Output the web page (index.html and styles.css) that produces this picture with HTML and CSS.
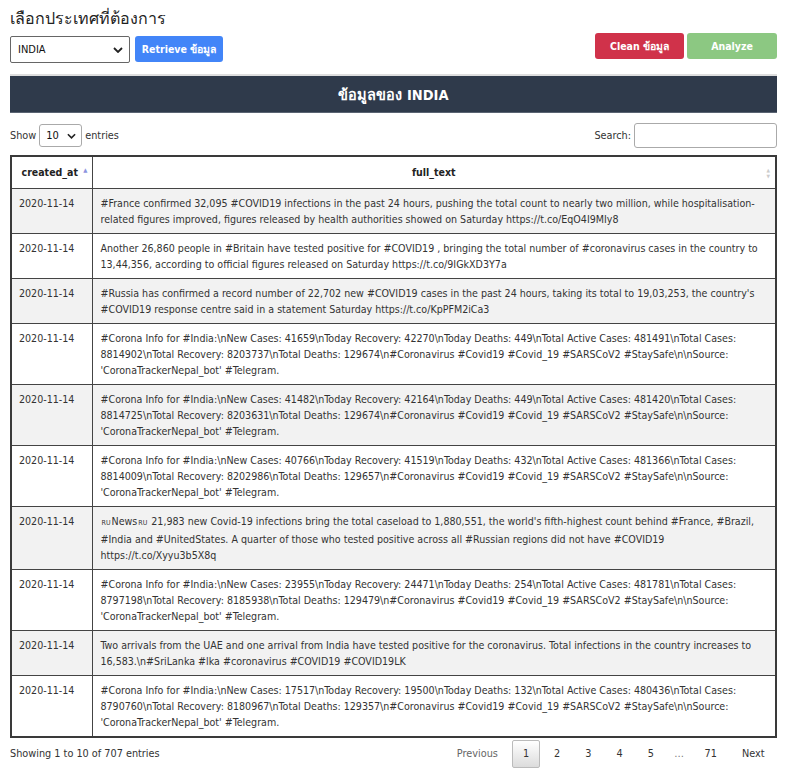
FILE: index.html
```html
<!DOCTYPE html>
<html lang="th">
<head>
<meta charset="utf-8">
<title>เลือกประเทศ</title>
<link rel="stylesheet" href="styles.css">
</head>
<body>
<div class="page">
  <h1 class="title">เลือกประเทศที่ต้องการ</h1>
  <div class="controls">
    <div class="left">
      <div class="select country"><span>INDIA</span><svg class="chev" viewBox="0 0 10 6" width="10" height="6"><path d="M1 1l4 4 4-4" fill="none" stroke="#222" stroke-width="1.8"/></svg></div>
      <button class="btn btn-blue">Retrieve ข้อมูล</button>
    </div>
    <div class="right">
      <button class="btn btn-red">Clean ข้อมูล</button>
      <button class="btn btn-green">Analyze</button>
    </div>
  </div>
  <div class="banner">ข้อมูลของ INDIA</div>
  <div class="dt-top">
    <div class="length">Show <div class="select small"><span>10</span><svg class="chev" viewBox="0 0 10 6" width="9" height="6"><path d="M1 1l4 4 4-4" fill="none" stroke="#222" stroke-width="1.8"/></svg></div> entries</div>
    <div class="search">Search: <div class="input"></div></div>
  </div>
  <table class="dt">
    <colgroup><col class="c1"><col class="c2"></colgroup>
    <thead>
      <tr><th class="sorted">created_at<span class="sort-up">▲</span></th><th class="sortable">full_text<span class="sort-both"><span>▲</span><span>▼</span></span></th></tr>
    </thead>
    <tbody>
      <tr><td>2020-11-14</td><td>#France confirmed 32,095 #COVID19 infections in the past 24 hours, pushing the total count to nearly two million, while hospitalisation-related figures improved, figures released by health authorities showed on Saturday https://t.co/EqO4I9MIy8</td></tr>
      <tr><td>2020-11-14</td><td>Another 26,860 people in #Britain have tested positive for #COVID19 , bringing the total number of #coronavirus cases in the country to 13,44,356, according to official figures released on Saturday https://t.co/9IGkXD3Y7a</td></tr>
      <tr><td>2020-11-14</td><td>#Russia has confirmed a record number of 22,702 new #COVID19 cases in the past 24 hours, taking its total to 19,03,253, the country's #COVID19 response centre said in a statement Saturday https://t.co/KpPFM2iCa3</td></tr>
      <tr><td>2020-11-14</td><td>#Corona Info for #India:\nNew Cases: 41659\nToday Recovery: 42270\nToday Deaths: 449\nTotal Active Cases: 481491\nTotal Cases: 8814902\nTotal Recovery: 8203737\nTotal Deaths: 129674\n#Coronavirus #Covid19 #Covid_19 #SARSCoV2 #StaySafe\n\nSource: 'CoronaTrackerNepal_bot' #Telegram.</td></tr>
      <tr><td>2020-11-14</td><td>#Corona Info for #India:\nNew Cases: 41482\nToday Recovery: 42164\nToday Deaths: 449\nTotal Active Cases: 481420\nTotal Cases: 8814725\nTotal Recovery: 8203631\nTotal Deaths: 129674\n#Coronavirus #Covid19 #Covid_19 #SARSCoV2 #StaySafe\n\nSource: 'CoronaTrackerNepal_bot' #Telegram.</td></tr>
      <tr><td>2020-11-14</td><td>#Corona Info for #India:\nNew Cases: 40766\nToday Recovery: 41519\nToday Deaths: 432\nTotal Active Cases: 481366\nTotal Cases: 8814009\nTotal Recovery: 8202986\nTotal Deaths: 129657\n#Coronavirus #Covid19 #Covid_19 #SARSCoV2 #StaySafe\n\nSource: 'CoronaTrackerNepal_bot' #Telegram.</td></tr>
      <tr><td>2020-11-14</td><td><span class="flag">RU</span>News<span class="flag">RU</span> 21,983 new Covid-19 infections bring the total caseload to 1,880,551, the world's fifth-highest count behind #France, #Brazil, #India and #UnitedStates. A quarter of those who tested positive across all #Russian regions did not have #COVID19 https://t.co/Xyyu3b5X8q</td></tr>
      <tr><td>2020-11-14</td><td>#Corona Info for #India:\nNew Cases: 23955\nToday Recovery: 24471\nToday Deaths: 254\nTotal Active Cases: 481781\nTotal Cases: 8797198\nTotal Recovery: 8185938\nTotal Deaths: 129479\n#Coronavirus #Covid19 #Covid_19 #SARSCoV2 #StaySafe\n\nSource: 'CoronaTrackerNepal_bot' #Telegram.</td></tr>
      <tr><td>2020-11-14</td><td>Two arrivals from the UAE and one arrival from India have tested positive for the coronavirus. Total infections in the country increases to 16,583.\n#SriLanka #lka #coronavirus #COVID19 #COVID19LK</td></tr>
      <tr><td>2020-11-14</td><td>#Corona Info for #India:\nNew Cases: 17517\nToday Recovery: 19500\nToday Deaths: 132\nTotal Active Cases: 480436\nTotal Cases: 8790760\nTotal Recovery: 8180967\nTotal Deaths: 129357\n#Coronavirus #Covid19 #Covid_19 #SARSCoV2 #StaySafe\n\nSource: 'CoronaTrackerNepal_bot' #Telegram.</td></tr>
    </tbody>
  </table>
  <div class="dt-bottom">
    <div class="info">Showing 1 to 10 of 707 entries</div>
    <div class="pager">
      <span class="pg disabled">Previous</span>
      <span class="pg current">1</span>
      <span class="pg">2</span>
      <span class="pg">3</span>
      <span class="pg">4</span>
      <span class="pg">5</span>
      <span class="pg ellipsis">…</span>
      <span class="pg">71</span>
      <span class="pg">Next</span>
    </div>
  </div>
</div>
</body>
</html>
```

FILE: styles.css
```css
* { box-sizing: border-box; }
html, body { margin: 0; padding: 0; background: #fff; }
body {
  font-family: "DejaVu Sans Condensed", "DejaVu Sans", sans-serif;
  font-size: 10.8px;
  color: #333;
}
.page { padding: 7px 20px 0 10px; width: 797px; }
.title {
  margin: 0;
  font-size: 16px;
  line-height: 24px;
  font-weight: normal;
  color: #222;
}
.controls {
  display: flex;
  justify-content: space-between;
  align-items: flex-start;
  margin-top: 2px;
}
.left { display: flex; gap: 5px; margin-top: 3px; }
.right { display: flex; gap: 3px; }
.select {
  display: flex;
  align-items: center;
  justify-content: space-between;
  background: #fff;
  border: 1px solid #666;
  border-radius: 2px;
  color: #111;
}
.select.country { width: 120px; height: 27px; padding: 0 6px 0 7px; font-size: 11px; }
.select.small { width: 43px; height: 23px; padding: 0 5px 0 6px; border-color: #aaa; border-radius: 3px; font-size: 11px; margin: 0 3px; }
.btn {
  border: none;
  border-radius: 3px;
  color: #fff;
  font-family: inherit;
  font-weight: bold;
  font-size: 10.5px;
  height: 26px;
  padding: 0 4px;
  white-space: nowrap;
}
.btn-blue { background: #4285f8; width: 88px; }
.btn-red { background: #d0324a; width: 89px; }
.btn-green { background: #8cc882; width: 90px; }
.banner {
  margin-top: 11px;
  height: 39px;
  background: #2f3a4b;
  border-top: 2px solid #dedede;
  border-bottom: 1px solid #5a6472;
  color: #fff;
  font-weight: bold;
  font-size: 14.5px;
  display: flex;
  align-items: center;
  justify-content: center;
}
.dt-top {
  display: flex;
  justify-content: space-between;
  align-items: center;
  margin-top: 10px;
}
.length, .search { display: flex; align-items: center; }
.input {
  width: 143px;
  height: 25px;
  border: 1px solid #aaa;
  border-radius: 3px;
  margin-left: 3px;
}
.dt {
  margin-top: 7px;
  width: 100%;
  border-collapse: collapse;
  border: 2px solid #3a3a3a;
  table-layout: fixed;
}
.c1 { width: 81px; }
.dt th, .dt td { border: 1px solid #444; }
.dt th {
  height: 32px;
  font-size: 10.5px;
  font-weight: bold;
  color: #222;
  position: relative;
  text-align: center;
  padding: 0 10px;
}
.dt th.sorted { padding: 0 12px 0 8px; }
.sort-up {
  position: absolute;
  right: 4px;
  top: 9px;
  font-size: 6px;
  color: #8c94e0;
}
.sort-both {
  position: absolute;
  right: 5px;
  top: 10px;
  display: flex;
  flex-direction: column;
  font-size: 5px;
  line-height: 6px;
  color: #ccc;
}
.dt td {
  vertical-align: top;
  padding: 6px 8px;
  line-height: 16px;
  font-size: 10.6px;
  color: #333;
}
.dt td:first-child { padding-left: 7px; }
.dt tbody tr:nth-child(odd) td { background: #f2f2f2; }
.flag { font-size: 7px; margin: 0 1px; }
.dt-bottom {
  display: flex;
  justify-content: space-between;
  align-items: center;
  margin-top: 2px;
}
.info { color: #333; }
.pager { display: flex; align-items: center; margin-right: 0; }
.pg {
  padding: 6px 9.5px;
  border: 1px solid transparent;
  border-radius: 2px;
  margin: 0 2px;
  color: #333;
  line-height: 14px;
}
.pg.disabled { color: #666; margin-right: 2px; }
.pg.current {
  border-color: #bbb;
  background: linear-gradient(#fff, #dcdcdc);
}
.pg.ellipsis { color: #777; padding: 6px 5px; }
```
